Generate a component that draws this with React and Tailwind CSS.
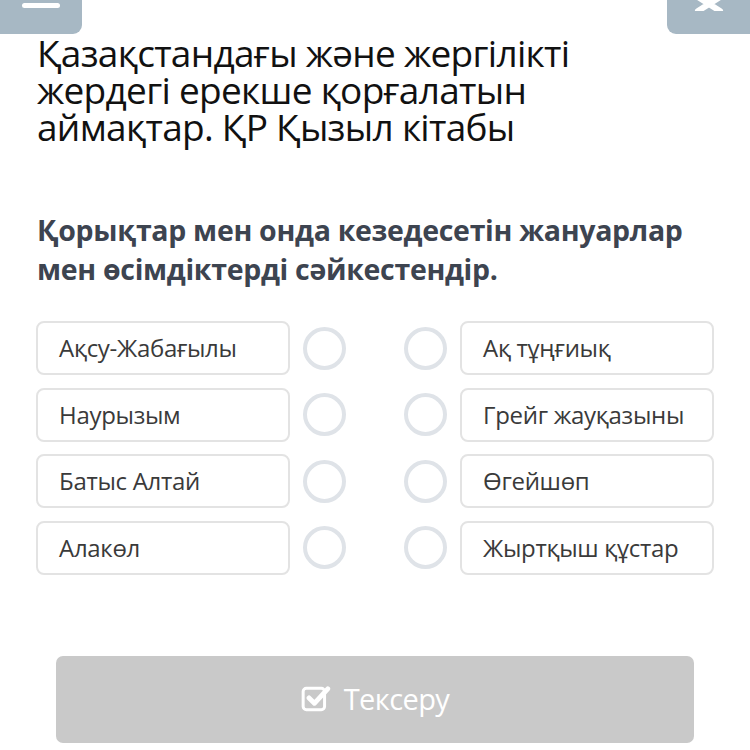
const left = ["Ақсу-Жабағылы", "Наурызым", "Батыс Алтай", "Алакөл"];
const right = ["Ақ тұңғиық", "Грейг жауқазыны", "Өгейшөп", "Жыртқыш құстар"];

const Card = ({ text }) => (
  <div className="w-[254px] h-[54px] rounded-[8px] border-2 border-[#e3e3e3] bg-white flex items-center pl-[21px] text-[24px] tracking-[-0.3px] text-[#3a3a3a]">
    {text}
  </div>
);

const Dot = () => (
  <div className="w-[43px] h-[43px] rounded-full border-[4px] border-[#dfe3e8]" />
);

export default function App() {
  return (
    <div
      className="w-[750px] h-[750px] bg-white overflow-hidden flex flex-col"
      style={{ fontFamily: '"Open Sans", "Noto Sans", sans-serif' }}
    >
      <div className="flex justify-between h-[34px]">
        <div className="w-[82px] h-[34px] bg-[#a7b8c4] rounded-br-[9px] flex justify-center">
          <div className="w-[38px] h-[5px] bg-white rounded-full mt-[3px]" />
        </div>
        <div className="w-[83px] h-[34px] bg-[#a7b8c4] rounded-bl-[9px] flex justify-center overflow-hidden">
          <svg width="34" height="14" viewBox="0 0 34 14" className="mt-[-3px]">
            <path d="M6 0 L28 14 M28 0 L6 14" stroke="white" strokeWidth="6" strokeLinecap="round" />
          </svg>
        </div>
      </div>

      <h1 className="mt-[0px] ml-[37px] text-[37px] leading-[37px] text-[#111] tracking-[-0.7px] w-[620px]">
        Қазақстандағы және жергілікті жердегі ерекше қорғалатын аймақтар. ҚР Қызыл кітабы
      </h1>

      <h2 className="mt-[66px] ml-[37px] text-[28.5px] leading-[39px] font-bold text-[#3d4450] tracking-[-0.3px] w-[660px]">
        Қорықтар мен онда кезедесетін жануарлар мен өсімдіктерді сәйкестендір.
      </h2>

      <div className="mt-[32px] ml-[36px] flex flex-col gap-[12.5px]">
        {left.map((l, i) => (
          <div key={i} className="flex items-center">
            <Card text={l} />
            <div className="ml-[13px]"><Dot /></div>
            <div className="ml-[58px]"><Dot /></div>
            <div className="ml-[13px]"><Card text={right[i]} /></div>
          </div>
        ))}
      </div>

      <div className="mt-[81px] ml-[56px] w-[638px] h-[87px] rounded-[7px] bg-[#c9c9c9] flex items-center justify-center gap-[13px] text-white text-[29px] tracking-[-0.6px]">
        <svg width="30" height="30" viewBox="0 0 28 28" fill="none">
          <rect x="2" y="4" width="20" height="20" rx="3" stroke="white" strokeWidth="2.8" />
          <path d="M7.5 13 L12.5 18 L25 4.5" stroke="white" strokeWidth="4.5" strokeLinecap="round" strokeLinejoin="round" />
        </svg>
        <span>Тексеру</span>
      </div>
    </div>
  );
}
